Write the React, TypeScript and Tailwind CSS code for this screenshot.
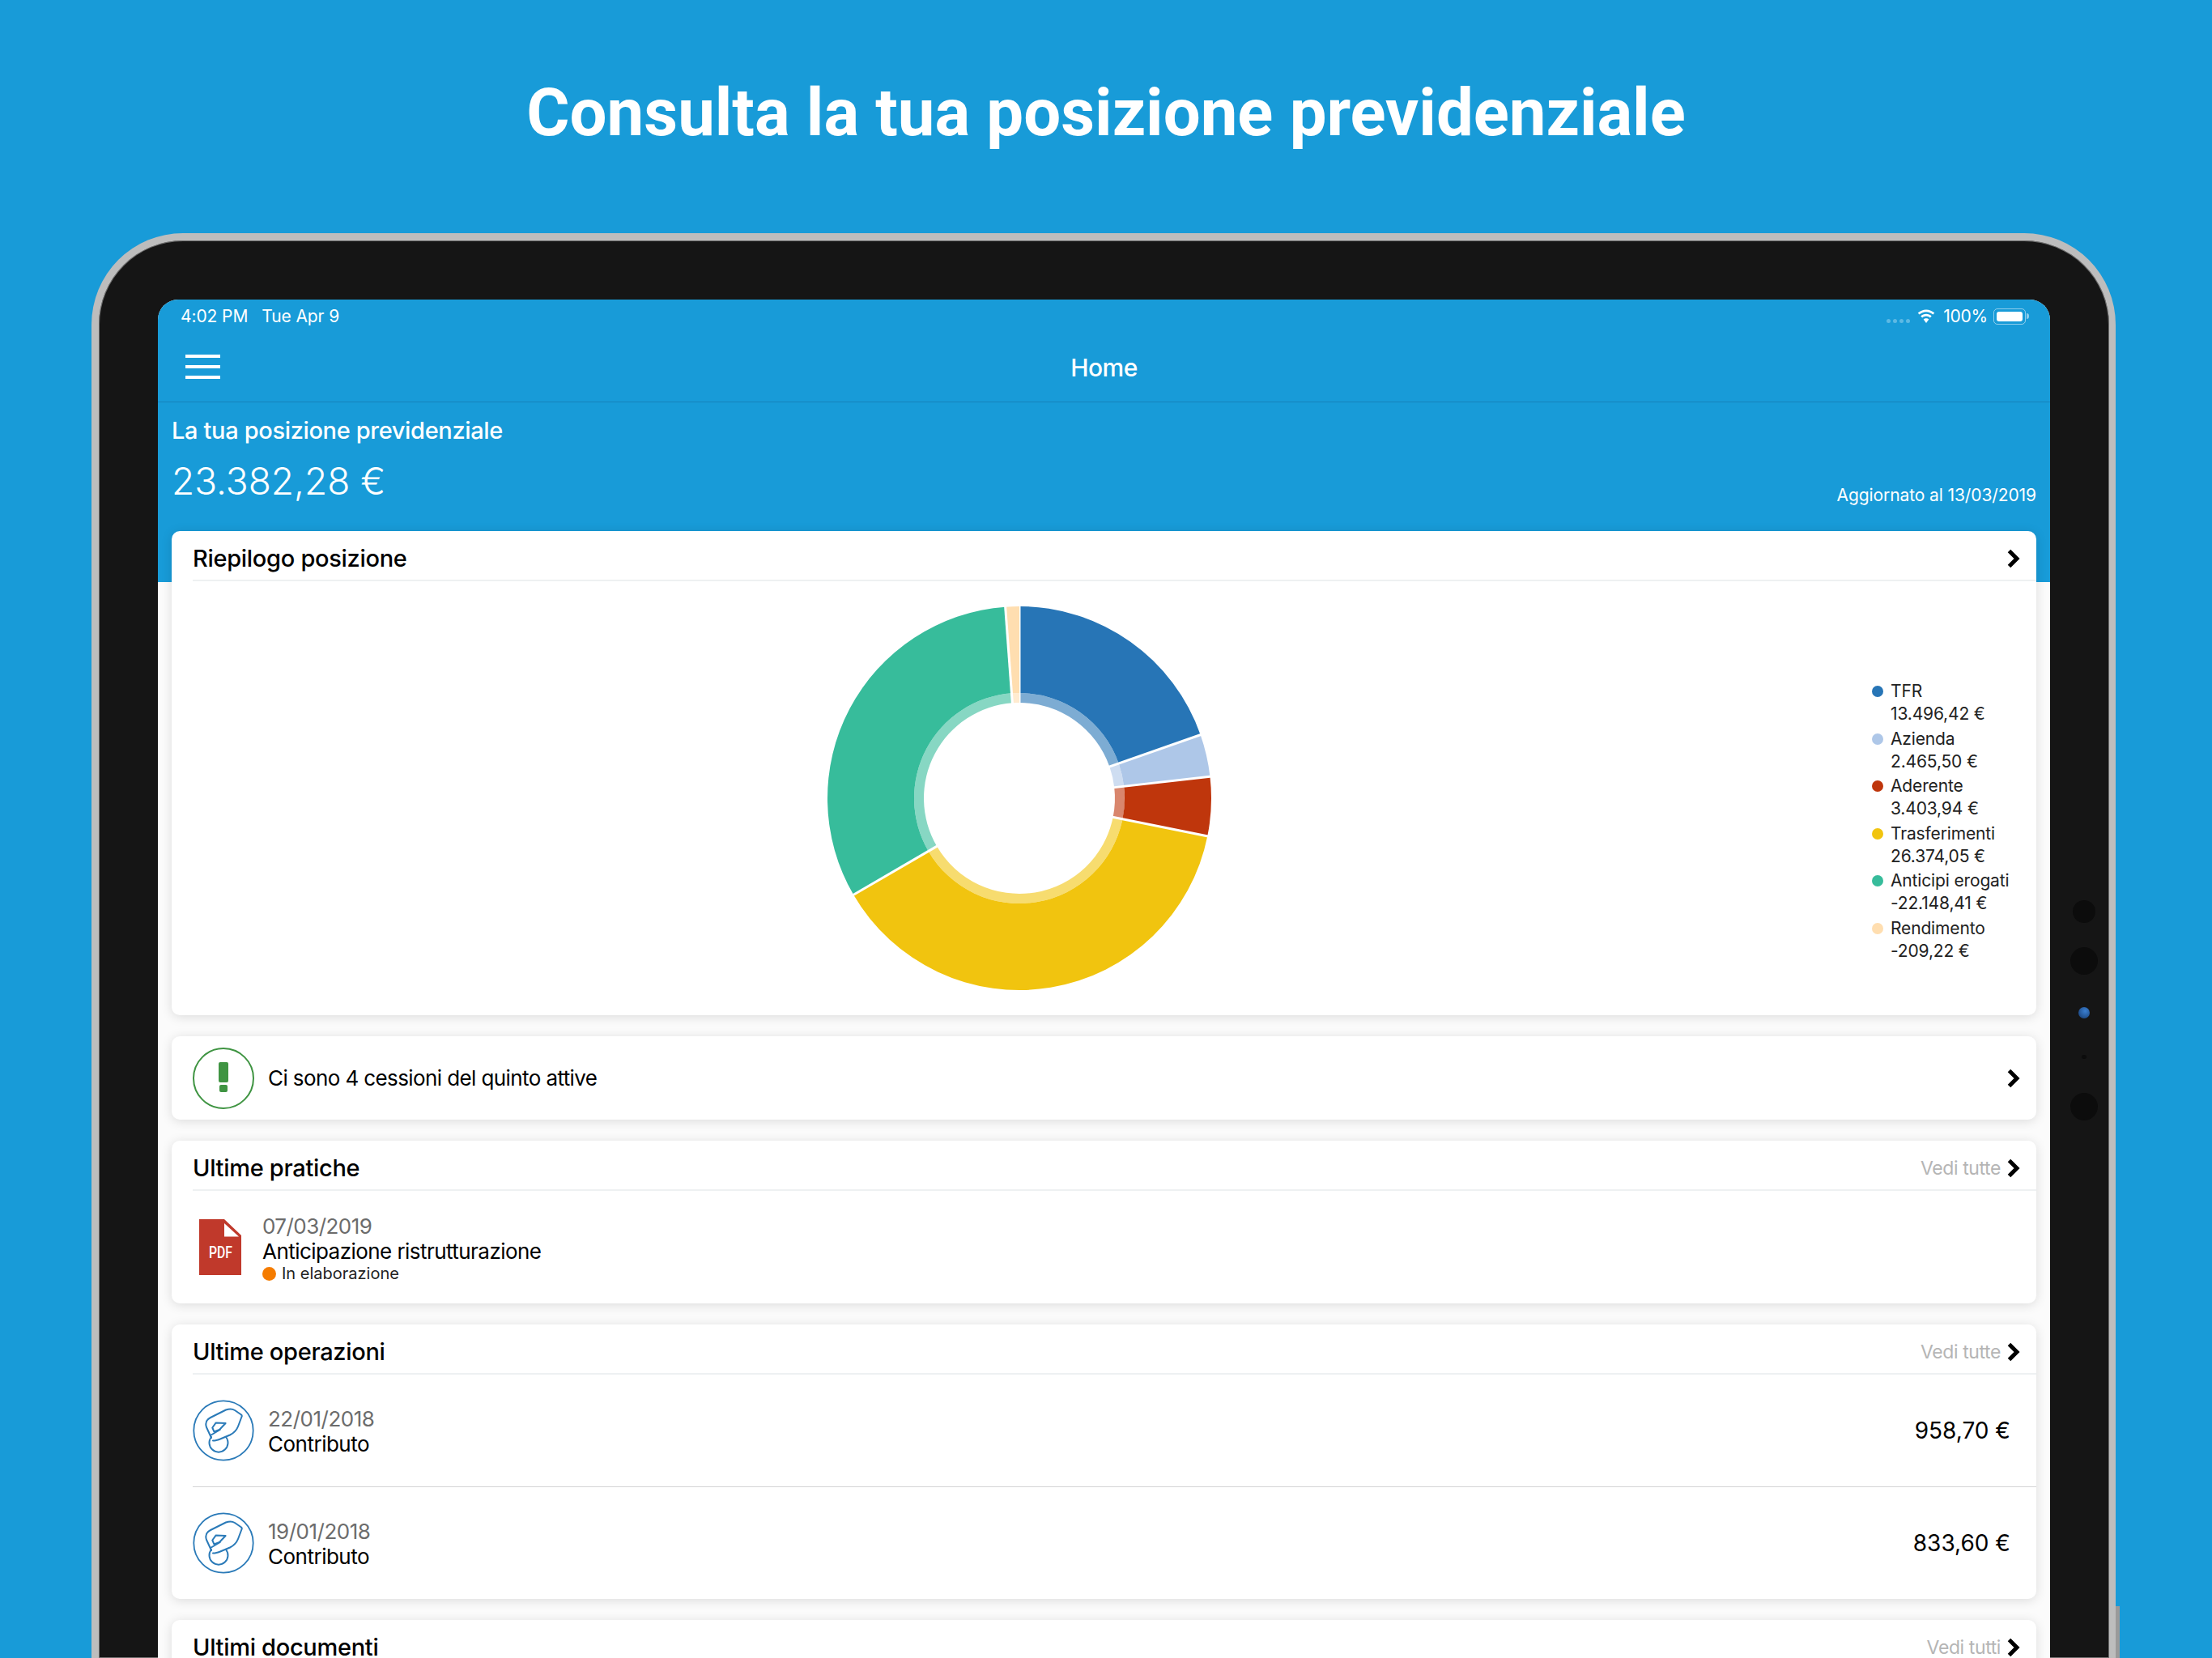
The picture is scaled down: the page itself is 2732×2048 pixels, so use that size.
import React from "react";

const slices = [
  { from: 0, to: 70.7, color: "#2775b6" },
  { from: 70.7, to: 83.5, color: "#aec7e8" },
  { from: 83.5, to: 101.4, color: "#bf360c" },
  { from: 101.4, to: 239.8, color: "#f1c40f" },
  { from: 239.8, to: 355.8, color: "#37bc9b" },
  { from: 355.8, to: 360, color: "#ffdeb0" },
];

const legend = [
  { label: "TFR", value: "13.496,42 €", dot: "bg-[#2775b6]" },
  { label: "Azienda", value: "2.465,50 €", dot: "bg-[#aec7e8]" },
  { label: "Aderente", value: "3.403,94 €", dot: "bg-[#bf360c]" },
  { label: "Trasferimenti", value: "26.374,05 €", dot: "bg-[#f1c40f]" },
  { label: "Anticipi erogati", value: "-22.148,41 €", dot: "bg-[#37bc9b]" },
  { label: "Rendimento", value: "-209,22 €", dot: "bg-[#ffdeb0]" },
];

const pt = (r: number, a: number) => {
  const t = ((a - 90) * Math.PI) / 180;
  return `${(240 + r * Math.cos(t)).toFixed(2)} ${(240 + r * Math.sin(t)).toFixed(2)}`;
};

// ring slice between two radii, angles clockwise from the top
function arc(r0: number, r1: number, from: number, to: number) {
  const big = to - from > 180 ? 1 : 0;
  return `M${pt(r1, from)}A${r1} ${r1} 0 ${big} 1 ${pt(r1, to)}L${pt(r0, to)}A${r0} ${r0} 0 ${big} 0 ${pt(r0, from)}Z`;
}

function Donut() {
  return (
    <svg width="480" height="480" viewBox="0 0 480 480">
      {slices.map((s) => (
        <g key={s.from}>
          <path d={arc(130, 237, s.from, s.to)} fill={s.color} />
          <path d={arc(118, 130, s.from, s.to)} fill={s.color} fillOpacity="0.6" />
          <path d={`M${pt(116, s.from)}L${pt(239, s.from)}`} stroke="#fff" strokeWidth="3" />
        </g>
      ))}
    </svg>
  );
}

function Chevron() {
  return (
    <svg width="16" height="24" viewBox="0 0 16 24" className="shrink-0 -ml-[1px]">
      <path d="M2.500 2.500 12 12 2.500 21.500" fill="none" stroke="#000" strokeWidth="5" />
    </svg>
  );
}

function HandIcon() {
  return (
    <svg width="76" height="76" viewBox="0 0 76 76" fill="none" stroke="#2a7ab8" strokeLinejoin="round" strokeLinecap="round" className="shrink-0">
      <circle cx="38" cy="38" r="36.700" strokeWidth="1.800" />
      <g strokeWidth="2">
        <path d="M23 47 17 34C15 28 18 24 22 22L41 12.500C45 11 49 11 52 13L60 18.500C61 19.500 61 20 60.500 21L56 33C54 38 51 41 46 43.500L34 48.500C30 50 27 51 25 50.500" />
        <path d="M24.300 34.500 28.700 28.400 40.600 29 33 37 26.400 39.400Z" />
        <path d="M22 44 33.800 37" />
        <path d="M23 46A11.500 11.500 0 1 0 41 46" />
      </g>
    </svg>
  );
}

function PdfIcon() {
  return (
    <div className="relative w-[52px] h-[69px] shrink-0">
      <svg width="52" height="69" viewBox="0 0 52 69" className="absolute inset-0">
        <path d="M0 0H31L52 20V69H0Z" fill="#c0392b" />
        <path d="M31 5 49 21.500H31Z" fill="#fff" />
      </svg>
      <span className="absolute left-[12px] top-[31px] font-['Roboto',sans-serif] text-[21px] leading-[21px] font-medium text-white scale-x-75 origin-left">PDF</span>
    </div>
  );
}

function Wifi() {
  return (
    <svg width="24" height="18" viewBox="0 0 24 18" fill="#fff">
      <path d="M12 3.200c3.200 0 6.200 1.300 8.400 3.400l1.900-2C19.600 2 16 .4 12 .4S4.400 2 1.700 4.600l1.900 2C5.800 4.500 8.800 3.200 12 3.200Z" />
      <path d="M12 8.600c1.800 0 3.500.7 4.800 1.900l1.900-2C16.900 6.800 14.600 5.800 12 5.800s-4.900 1-6.700 2.700l1.900 2c1.300-1.200 3-1.900 4.800-1.900Z" />
      <path d="M12 11.200c-1.300 0-2.500.5-3.300 1.300L12 17l3.300-4.500c-.8-.8-2-1.300-3.300-1.300Z" />
    </svg>
  );
}

function CardHeader({ title, more }: { title: string; more?: string }) {
  return (
    <div className="flex items-center h-[62px] pt-[7px] ml-[26px] pr-[20px] border-b-2 border-[#eef1f2]">
      <h2 className="flex-1 text-[29px] leading-[28px] font-medium text-black tracking-[-0.3px]">{title}</h2>
      {more && <span className="mr-[9px] text-[23px] leading-[28px] tracking-[-0.4px] text-[#b5b5b5]">{more}</span>}
      <Chevron />
    </div>
  );
}

function Card({ children, className }: { children: React.ReactNode; className?: string }) {
  return (
    <section className={`bg-white rounded-[10px] shadow-[0_2px_14px_rgba(0,0,0,0.13)] overflow-hidden ${className}`}>
      {children}
    </section>
  );
}

function Operazione({ date, amount }: { date: string; amount: string }) {
  return (
    <div className="flex items-center gap-[17px] h-[138px] pl-[26px] pr-[32px]">
      <HandIcon />
      <div className="flex-1 pt-[2px] text-[26px] leading-[31px] tracking-[-0.5px]">
        <div className="text-[#6c6c6c]">{date}</div>
        <div className="text-black">Contributo</div>
      </div>
      <div className="text-[28px] text-black">{amount}</div>
    </div>
  );
}

export default function App() {
  return (
    <div className="w-[2732px] h-[2048px] overflow-hidden bg-[#189bd8] font-['Inter',sans-serif]">
      <h1 className="h-[288px] pt-[92px] text-center text-[81.500px] leading-[94px] font-['Roboto',sans-serif] font-bold text-white">
        Consulta la tua posizione previdenziale
      </h1>

      <div className="relative ml-[113px] w-[2500px] h-[1760px] rounded-t-[113px] border-t-[9px] border-l-[9px] border-r-[8px] border-[#bdbdbd] bg-[#151515] shadow-[inset_0_0_0_1px_#6e6e6e] pt-[73px] pl-[73px]">
        <div className="absolute right-[17px] top-[815px] w-[28px] h-[28px] rounded-full bg-[#0c0c0c]" />
        <div className="absolute right-[14px] top-[873px] w-[34px] h-[34px] rounded-full bg-[#0c0c0c]" />
        <div className="absolute right-[24px] top-[947px] w-[14px] h-[14px] rounded-full bg-[radial-gradient(circle_at_60%_35%,#3a7fd0,#143a70)]" />
        <div className="absolute right-[28px] top-[1006px] w-[6px] h-[5px] rounded-full bg-[#0c0c0c]" />
        <div className="absolute right-[14px] top-[1053px] w-[34px] h-[34px] rounded-full bg-[#0c0c0c]" />
        <div className="absolute -right-[13px] top-[1687px] w-[5px] h-[80px] bg-[#9a9a9a]" />

        <div className="w-[2337px] h-[1700px] rounded-t-[25px] overflow-hidden bg-[#fbfbfb]">
          <div className="h-[349px] bg-[#189bd8] text-white">
            <div className="flex items-center h-[40px] pt-[1px] pl-[28px] pr-[26px] text-[21px]">
              <span className="tracking-[-0.1px]">4:02 PM</span>
              <span className="ml-[17px] flex-1 tracking-[-0.1px]">Tue Apr 9</span>
              <span className="flex gap-[3px] mr-[8px] mt-[12px]">
                <i className="w-[5px] h-[5px] rounded-full bg-white/30" />
                <i className="w-[5px] h-[5px] rounded-full bg-white/30" />
                <i className="w-[5px] h-[5px] rounded-full bg-white/30" />
                <i className="w-[5px] h-[5px] rounded-full bg-white/30" />
              </span>
              <Wifi />
              <span className="ml-[9px] tracking-[-0.2px]">100%</span>
              <span className="ml-[7px] w-[40px] h-[20px] p-[3px] rounded-[5px] border border-white/50">
                <span className="block h-full rounded-[3px] bg-white" />
              </span>
              <span className="ml-[1px] w-[3px] h-[7px] rounded-r-full bg-white/50" />
            </div>

            <div className="relative flex items-center justify-center h-[87px] pt-[2px] border-b border-[#1682bb]">
              <div className="absolute left-[34px] top-[28px] flex flex-col gap-[9px]">
                <i className="block w-[43px] h-[4px] bg-white" />
                <i className="block w-[43px] h-[4px] bg-white" />
                <i className="block w-[43px] h-[4px] bg-white" />
              </div>
              <span className="text-[30px] font-medium tracking-[-0.5px]">Home</span>
            </div>

            <div className="pl-[17px] pr-[17px]">
              <div className="mt-[17px] text-[29px] leading-[36px] font-medium tracking-[-0.35px]">La tua posizione previdenziale</div>
              <div className="flex items-end justify-between mt-[16px]">
                <div className="text-[46px] leading-[56px] font-light">23.382,28 €</div>
                <div className="text-[21px] leading-[30px] mb-[-5px] tracking-[-0.1px]">Aggiornato al 13/03/2019</div>
              </div>
            </div>
          </div>

          <div className="flex flex-col gap-[26px] -mt-[63px] mx-[17px]">
            <Card className="h-[598px]">
              <CardHeader title="Riepilogo posizione" />
              <div className="flex">
                <div className="flex flex-1 justify-center pt-[28px]">
                  <Donut />
                </div>
                <ul className="w-[210px] pt-[122px] pl-[7px] text-[21px] leading-[28px] tracking-[-0.15px] text-[#222]">
                  {legend.map((l) => (
                    <li key={l.label} className="h-[58.600px]">
                      <div className="flex items-center gap-[9px]">
                        <i className={`w-[14px] h-[14px] rounded-full ${l.dot}`} />
                        <span>{l.label}</span>
                      </div>
                      <div className="pl-[23px]">{l.value}</div>
                    </li>
                  ))}
                </ul>
              </div>
            </Card>

            <Card className="h-[103px]">
              <div className="flex items-center h-full pl-[26px] pr-[20px]">
                <div className="flex items-center justify-center w-[76px] h-[76px] rounded-full border-2 border-[#3f9442] shrink-0">
                  <div className="flex flex-col items-center gap-[3px] mb-[3px]">
                    <i className="block w-[12px] h-[25px] rounded-[2px] bg-[#3f9442]" />
                    <i className="block w-[10px] h-[9px] rounded-[2px] bg-[#3f9442]" />
                  </div>
                </div>
                <div className="flex-1 ml-[17px] text-[26px] tracking-[-0.6px] text-black">Ci sono 4 cessioni del quinto attive</div>
                <Chevron />
              </div>
            </Card>

            <Card className="h-[201px]">
              <CardHeader title="Ultime pratiche" more="Vedi tutte" />
              <div className="flex gap-[26px] pl-[34px] pt-[28px]">
                <div className="pt-[7px]">
                  <PdfIcon />
                </div>
                <div className="text-[26px] leading-[31px] tracking-[-0.55px]">
                  <div className="text-[#6c6c6c]">07/03/2019</div>
                  <div className="text-black">Anticipazione ristrutturazione</div>
                  <div className="flex items-center gap-[7px] text-[20px] leading-[24px] tracking-normal text-[#222]">
                    <i className="w-[17px] h-[17px] rounded-full bg-[#f57c00]" />
                    In elaborazione
                  </div>
                </div>
              </div>
            </Card>

            <Card className="h-[339px]">
              <CardHeader title="Ultime operazioni" more="Vedi tutte" />
              <Operazione date="22/01/2018" amount="958,70 €" />
              <div className="ml-[26px] border-t border-[#d4d4d6]" />
              <Operazione date="19/01/2018" amount="833,60 €" />
            </Card>

            <Card className="h-[200px]">
              <CardHeader title="Ultimi documenti" more="Vedi tutti" />
            </Card>
          </div>
        </div>
      </div>
    </div>
  );
}
